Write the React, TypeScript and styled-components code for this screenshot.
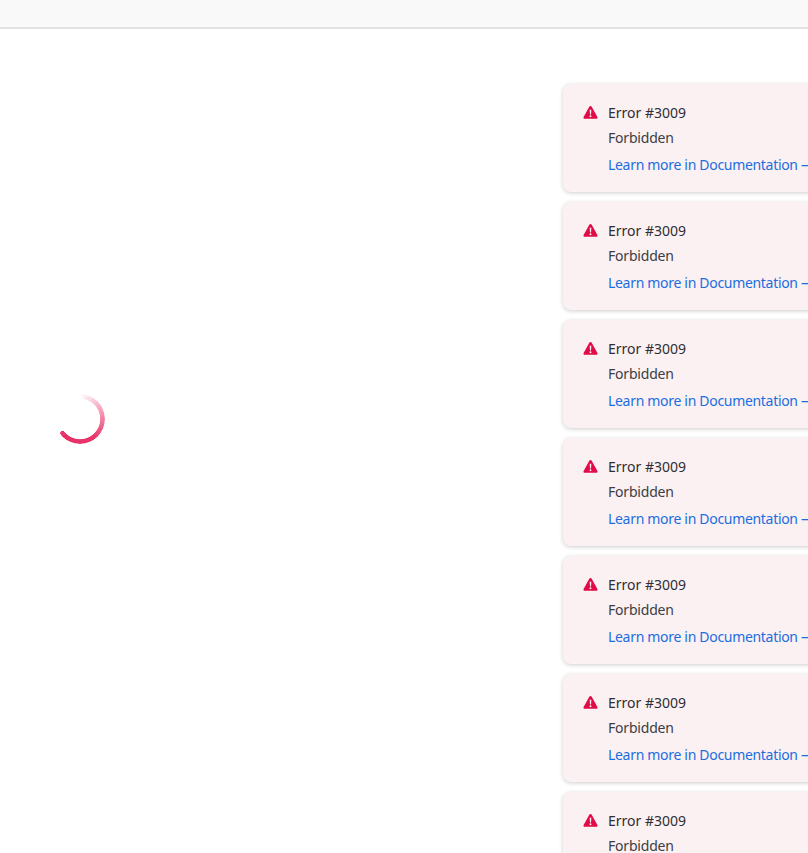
import styled, { createGlobalStyle } from "styled-components";

const GlobalStyle = createGlobalStyle`
    html, body {
        margin: 0;
        height: 100%;
        overflow: hidden;
        background-color: #ffffff;
        font-family: "Noto Sans", "Open Sans", sans-serif;
    }
    #root {
        height: 100%;
    }
`;

const Page = styled.div`
    height: 853px;
    display: flex;
    flex-direction: column;
    overflow: hidden;
`;
const TopBar = styled.header`
    height: 27px;
    flex-shrink: 0;
    background-color: #f9f9f9;
    border-bottom: 2px solid #e2e2e2;
`;
const Main = styled.main`
    flex: 1;
    display: flex;
    min-height: 0;
`;
const LoaderArea = styled.div`
    width: 563px;
    flex-shrink: 0;
    display: flex;
    align-items: flex-start;
    padding: 365px 0 0 55px;
    box-sizing: border-box;
`;
const Spinner = styled.div`
    width: 50px;
    height: 50px;
    border-radius: 50%;
    background:
        radial-gradient(circle at 7.8px 39.4px, #e8376c 2.3px, transparent 2.9px),
        conic-gradient(from 0deg, rgba(232, 55, 108, 0) 0deg, rgba(232, 55, 108, 0.35) 50deg, #e8376c 140deg, #e62f66 230deg, transparent 231deg);
    -webkit-mask: radial-gradient(farthest-side, transparent calc(100% - 5.2px), #000 calc(100% - 4.4px));
    mask: radial-gradient(farthest-side, transparent calc(100% - 5.2px), #000 calc(100% - 4.4px));
`;
const ToastList = styled.section`
    flex: 1;
    min-width: 0;
    display: flex;
    flex-direction: column;
    gap: 10px;
    padding-top: 55px;
`;
const Toast = styled.article`
    width: 420px;
    height: 108px;
    flex-shrink: 0;
    box-sizing: border-box;
    display: flex;
    gap: 10px;
    padding: 19px 20px;
    background-color: #fbf0f2;
    border-radius: 8px;
    box-shadow: 0 1px 4px rgba(0, 0, 0, 0.2);
`;
const ToastIcon = styled.svg`
    width: 15px;
    height: 15px;
    flex-shrink: 0;
    margin-top: 2px;
`;
const ToastBody = styled.div`
    display: flex;
    flex-direction: column;
    font-size: 14px;
    line-height: 20px;
    color: #3d3d43;
`;
const Title = styled.div`
    color: #2e2e33;
`;
const Message = styled.div`
    margin-top: 5px;
    letter-spacing: -0.2px;
`;
const DocLink = styled.a`
    margin-top: 7px;
    letter-spacing: -0.31px;
    color: #1a6ee0;
    text-decoration: none;
    white-space: nowrap;
`;
const LinkArrow = styled.span`
    margin-left: 3px;
    font-family: "DejaVu Sans", sans-serif;
    line-height: 0;
`;

function ErrorToast() {
    return (
        <Toast>
            <ToastIcon viewBox="0 0 16 16">
                <path
                    fill="#e00b47"
                    fillRule="evenodd"
                    d="M8 1c.5 0 .9.25 1.15.7l6.2 11c.5.9-.1 2-1.15 2H1.8c-1.05 0-1.65-1.1-1.15-2l6.2-11C7.1 1.25 7.5 1 8 1zM7.1 5l.35 5h1.1l.35-5H7.1zM8 10.9a1.05 1.05 0 1 0 0 2.1 1.05 1.05 0 0 0 0-2.1z"
                />
            </ToastIcon>
            <ToastBody>
                <Title>Error #3009</Title>
                <Message>Forbidden</Message>
                <DocLink href="#">Learn more in Documentation<LinkArrow>→</LinkArrow></DocLink>
            </ToastBody>
        </Toast>
    );
}

const toasts = [0, 1, 2, 3, 4, 5, 6];

export default function App() {
    return (
        <Page>
            <GlobalStyle />
            <TopBar />
            <Main>
                <LoaderArea>
                    <Spinner />
                </LoaderArea>
                <ToastList>
                    {toasts.map((id) => (
                        <ErrorToast key={id} />
                    ))}
                </ToastList>
            </Main>
        </Page>
    );
}
